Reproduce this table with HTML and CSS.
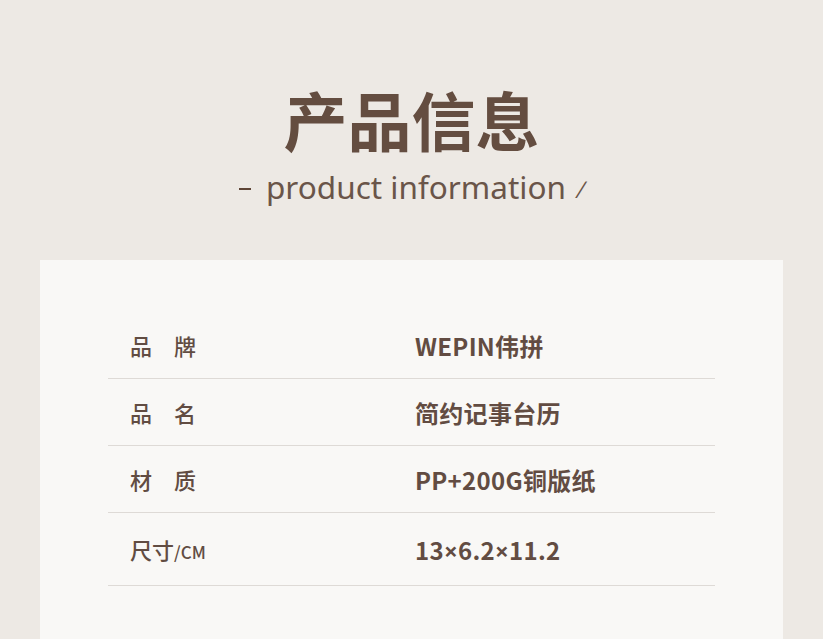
FILE: index.html
```html
<!DOCTYPE html>
<html lang="zh">
<head>
<meta charset="utf-8">
<link rel="stylesheet" href="styles.css">
</head>
<body>
<div class="page">
  <header class="header">
    <h1 class="title">产品信息</h1>
    <div class="subtitle"><span class="dash"></span><span class="sub-text">product information</span><span class="slash">∕</span></div>
  </header>
  <section class="card">
    <div class="table">
      <div class="row"><div class="label">品　牌</div><div class="value">WEPIN伟拼</div></div>
      <div class="row"><div class="label">品　名</div><div class="value">简约记事台历</div></div>
      <div class="row"><div class="label">材　质</div><div class="value">PP+200G铜版纸</div></div>
      <div class="row row-last"><div class="label">尺寸<span class="unit">/CM</span></div><div class="value">13<span class="times">×</span>6.2<span class="times">×</span>11.2</div></div>
    </div>
  </section>
</div>
</body>
</html>
```
FILE: styles.css
```css
html, body {
  margin: 0;
  padding: 0;
  background: #ede9e4;
}
.page {
  width: 823px;
  height: 639px;
  overflow: hidden;
  color: #654f44;
  font-family: "Noto Sans CJK SC", "Noto Sans", sans-serif;
}
.header {
  height: 260px;
  box-sizing: border-box;
  padding-top: 80px;
  display: flex;
  flex-direction: column;
  align-items: center;
}
.title {
  margin: 0;
  font-size: 64px;
  line-height: 76px;
  font-weight: 700;
  letter-spacing: 0;
  color: #644d40;
}
.subtitle {
  margin-top: 9px;
  display: flex;
  align-items: center;
  font-family: "Noto Sans", sans-serif;
  font-size: 31.5px;
  line-height: 40px;
  color: #6a5549;
}
.dash {
  width: 12px;
  height: 2px;
  background: #5e4536;
  margin-right: 15px;
  margin-top: 4px;
}
.slash {
  font-size: 24px;
  margin-left: 14px;
  margin-top: 4px;
}
.card {
  margin: 0 40px;
  background: #f9f8f6;
  padding: 52px 68px 0;
  height: 400px;
}
.table {
  display: flex;
  flex-direction: column;
}
.row {
  display: flex;
  align-items: center;
  height: 66px;
  border-bottom: 1px solid #dedad6;
  font-size: 22px;
}
.row-last {
  height: 72px;
}
.label {
  width: 285px;
  padding-left: 22px;
  font-weight: 500;
  color: #614c42;
}
.unit {
  font-size: 17px;
  font-weight: 500;
}
.value {
  font-size: 24px;
  font-weight: 700;
  letter-spacing: 0.3px;
  color: #624c42;
}
.times {
  font-family: "Noto Sans", sans-serif;
}
```
